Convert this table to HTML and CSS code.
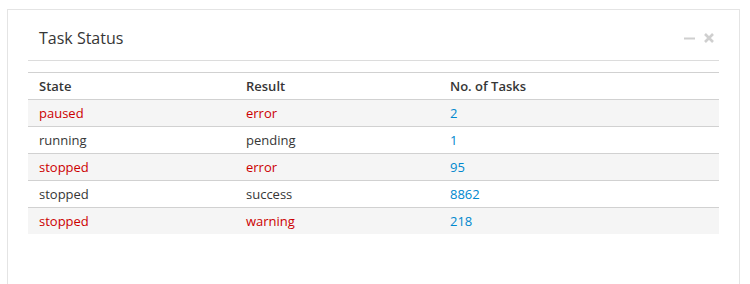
FILE: index.html
```html
<!DOCTYPE html>
<html lang="en">
<head>
<meta charset="utf-8">
<title>Task Status</title>
<link rel="stylesheet" href="styles.css">
</head>
<body>
  <section class="card">
    <header class="card-head">
      <h2 class="card-title">Task Status</h2>
      <div class="card-tools">
        <svg class="tool" width="11" height="11" viewBox="0 0 11 11" aria-label="minimize">
          <rect x="0" y="4.5" width="11" height="2" fill="currentColor"/>
        </svg>
        <svg class="tool" width="10" height="10" viewBox="0 0 10 10" aria-label="close">
          <path d="M1 1 L9 9 M9 1 L1 9" stroke="currentColor" stroke-width="2.6" fill="none"/>
        </svg>
      </div>
    </header>
    <table class="tasks">
      <thead>
        <tr><th class="c-state">State</th><th class="c-result">Result</th><th>No. of Tasks</th></tr>
      </thead>
      <tbody>
        <tr class="stripe bad"><td>paused</td><td>error</td><td class="num">2</td></tr>
        <tr><td>running</td><td>pending</td><td class="num">1</td></tr>
        <tr class="stripe bad"><td>stopped</td><td>error</td><td class="num">95</td></tr>
        <tr><td>stopped</td><td>success</td><td class="num">8862</td></tr>
        <tr class="stripe bad"><td>stopped</td><td>warning</td><td class="num">218</td></tr>
      </tbody>
    </table>
  </section>
</body>
</html>
```
FILE: styles.css
```css
html, body {
  margin: 0;
  background: #fff;
}

body {
  padding: 9px 10px 0 7px;
  font-family: "Open Sans", "Liberation Sans", sans-serif;
  color: #363636;
}

.card {
  border: 1px solid #e4e4e4;
  border-bottom: none;
  padding: 0 20px;
  min-height: 300px;
}

.card-head {
  display: flex;
  align-items: center;
  justify-content: space-between;
  height: 50px;
  border-bottom: 1px solid #dcdcdc;
}

.card-title {
  margin: 0;
  padding-left: 11px;
  padding-top: 6px;
  font-size: 16px;
  font-weight: 400;
  color: #363636;
}

.card-tools {
  display: flex;
  align-items: center;
  gap: 9px;
  color: #cfcfcf;
  padding-top: 6px;
  padding-right: 5px;
}

.tool {
  display: block;
}

.tasks {
  width: 100%;
  margin-top: 11px;
  border-collapse: collapse;
  font-size: 13px;
}

.tasks th,
.tasks td {
  text-align: left;
  padding: 0 11px;
  height: 26px;
  border-top: 1px solid #d1d1d1;
}

.tasks th {
  font-weight: 600;
  color: #363636;
}

.c-state { width: 185px; }
.c-result { width: 182px; }

.stripe td { background: #f5f5f5; }

.bad td { color: #cc0000; }

.tasks td.num { color: #0088ce; }
```
